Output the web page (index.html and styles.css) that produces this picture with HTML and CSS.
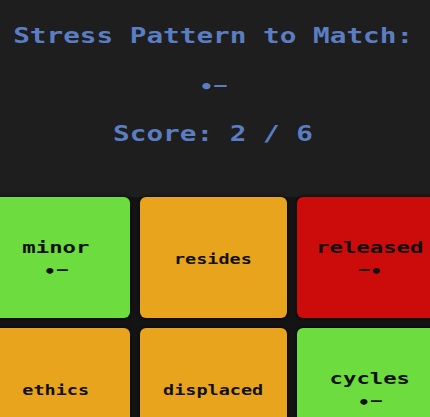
FILE: index.html
```html
<!DOCTYPE html>
<html lang="en">
<head>
<meta charset="utf-8">
<title>Stress Match</title>
<link rel="stylesheet" href="styles.css">
</head>
<body>
<main class="game">
  <header class="status">
    <h1 class="prompt"><span class="wide">Stress Pattern to Match:</span></h1>
    <p class="target"><span class="wide"><span class="beat">•</span>−</span></p>
    <p class="score"><span class="wide">Score: 2 / 6</span></p>
  </header>
  <section class="board-wrap">
    <div class="board">
      <div class="tile match"><span class="word">minor</span><span class="stress"><span class="beat">•</span>−</span></div>
      <div class="tile hidden"><span class="word">resides</span></div>
      <div class="tile miss"><span class="word">released</span><span class="stress">−<span class="beat">•</span></span></div>
      <div class="tile hidden"><span class="word">ethics</span></div>
      <div class="tile hidden"><span class="word">displaced</span></div>
      <div class="tile match"><span class="word">cycles</span><span class="stress"><span class="beat">•</span>−</span></div>
    </div>
  </section>
</main>
</body>
</html>
```
FILE: styles.css
```css
html, body {
  margin: 0;
  height: 100%;
  overflow: hidden;
}

body {
  background: #1e1e1e;
  font-family: "DejaVu Sans Mono", "Liberation Mono", monospace;
  font-weight: bold;
  padding-right: 4px;
}

/* the blocky pixel lettering is wider than the mono face */
.wide {
  display: inline-block;
  transform: scaleX(1.35);
}

/* stressed-syllable dot, dropped onto the same axis as the dash */
.beat {
  vertical-align: -0.13em;
  line-height: 0;
}

.status {
  text-align: center;
  color: #5b7dc2;
  padding-top: 24px;
}

.prompt {
  margin: 0;
  font-size: 20.5px;
  line-height: 24px;
  font-weight: bold;
}

.target {
  margin: 27px 0 0;
  font-size: 17px;
  line-height: 20px;
}

.score {
  margin: 27px 0 0;
  font-size: 20.5px;
  line-height: 24px;
}

.board-wrap {
  display: flex;
  justify-content: center;
  margin-top: 51px;
}

.board {
  flex: none;
  display: grid;
  grid-template-columns: repeat(3, 147px);
  grid-auto-rows: 121px;
  gap: 10px;
  background: #141414;
}

.tile {
  border-radius: 6px;
  box-shadow: 0 0 3px 1px rgba(0, 0, 0, 0.55);
  display: flex;
  flex-direction: column;
  align-items: center;
  justify-content: center;
  gap: 6px;
  padding-top: 3px;
  color: #111;
  text-align: center;
}

.tile .word,
.tile .stress {
  display: block;
  transform: scaleX(1.35);
}

.tile .word {
  font-size: 16.5px;
  line-height: 16px;
}

.tile .stress {
  font-size: 15px;
  line-height: 16px;
}

.tile.hidden .word {
  font-size: 13.7px;
}

.match { background: #6cdc3e; }
.hidden { background: #e8a41c; }
.miss { background: #cc0b0b; }
```
